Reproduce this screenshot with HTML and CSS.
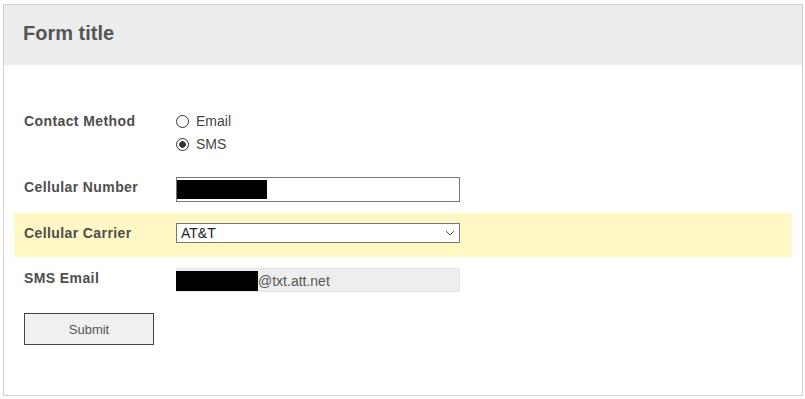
FILE: index.html
```html
<!DOCTYPE html>
<html lang="en">
<head>
    <meta charset="UTF-8">
    <meta name="viewport" content="width=device-width, initial-scale=1.0">
    <title>Form title</title>
    <link rel="stylesheet" href="styles.css">
</head>
<body>
    <div class="form-card">
        <div class="form-header">
            <h1>Form title</h1>
        </div>

        <form class="form-body">
            <div class="row">
                <div class="label label-tall">Contact Method</div>
                <div class="options">
                    <label class="option"><input type="radio" name="method" value="email"> Email</label>
                    <label class="option"><input type="radio" name="method" value="sms" checked> SMS</label>
                </div>
            </div>

            <div class="row">
                <div class="label">Cellular Number</div>
                <div class="text-box">
                    <span class="redact redact-number"></span>
                </div>
            </div>

            <div class="row row-highlight">
                <div class="label">Cellular Carrier</div>
                <div class="select-wrap">
                    <select class="select">
                        <option>AT&amp;T</option>
                        <option>Verizon</option>
                        <option>T-Mobile</option>
                    </select>
                    <svg class="chevron" width="10" height="6" viewBox="0 0 10 6">
                        <polyline points="1,1 5,5 9,1" fill="none" stroke="#555" stroke-width="1"/>
                    </svg>
                </div>
            </div>

            <div class="row">
                <div class="label">SMS Email</div>
                <div class="readonly-box">
                    <span class="redact redact-email"></span><span class="domain">@txt.att.net</span>
                </div>
            </div>

            <div class="actions">
                <button type="button" class="submit">Submit</button>
            </div>
        </form>
    </div>
</body>
</html>
```

FILE: styles.css
```css
body {
    margin: 0;
    font-family: "Liberation Sans", Arial, sans-serif;
    background: #ffffff;
}

.form-card {
    box-sizing: border-box;
    width: 800px;
    height: 392px;
    margin: 4px 0 0 3px;
    border: 1px solid #d0d0d0;
    background: #ffffff;
}

.form-header {
    height: 60px;
    display: flex;
    align-items: center;
    padding: 0 19px 3px;
    box-sizing: border-box;
    background: #ededed;
}

.form-header h1 {
    margin: 0;
    font-size: 20px;
    font-weight: bold;
    color: #555555;
}

.form-body {
    padding: 35px 10px 0;
}

.row {
    display: grid;
    grid-template-columns: 152px 284px;
    align-items: start;
    padding: 10px;
    margin-bottom: 1px;
}

.row-highlight {
    background: #fff7c4;
}

.label {
    font-size: 14px;
    font-weight: bold;
    line-height: 20px;
    letter-spacing: 0.4px;
    color: #4d4d4d;
}

.label-tall {
    line-height: 23px;
}

.options {
    display: flex;
    flex-direction: column;
}

.option {
    display: flex;
    align-items: center;
    font-size: 14px;
    line-height: 23px;
    color: #444444;
}

.option input {
    appearance: none;
    box-sizing: border-box;
    width: 13px;
    height: 13px;
    margin: 0 7px 0 0;
    border: 1px solid #333333;
    border-radius: 50%;
    background: #ffffff;
}

.option input:checked {
    background: radial-gradient(circle, #333333 0 3px, #ffffff 3.5px);
}

.text-box {
    box-sizing: border-box;
    height: 25px;
    padding: 2px 0 0;
    border: 1px solid #767676;
    background: #ffffff;
}

.redact {
    display: inline-block;
    background: #000000;
    vertical-align: top;
}

.redact-number {
    width: 90px;
    height: 19px;
}

.select-wrap {
    position: relative;
    height: 24px;
}

.select {
    appearance: none;
    box-sizing: border-box;
    width: 284px;
    height: 20px;
    margin: 0;
    padding: 0 4px;
    border: 1px solid #767676;
    border-radius: 0;
    background: #ffffff;
    font-family: "Liberation Sans", Arial, sans-serif;
    font-size: 14px;
    color: #222222;
}

.chevron {
    position: absolute;
    top: 7px;
    right: 5px;
    pointer-events: none;
}

.readonly-box {
    box-sizing: border-box;
    height: 24px;
    padding: 2px 0 0;
    border: 1px solid #e8e8e8;
    border-left: 0;
    background: #eeeeee;
    display: flex;
    align-items: flex-start;
}

.redact-email {
    width: 82px;
    height: 20px;
}

.domain {
    font-size: 14px;
    line-height: 20px;
    color: #555555;
}

.actions {
    padding: 10px;
}

.submit {
    box-sizing: border-box;
    width: 130px;
    height: 32px;
    border: 1px solid #444444;
    border-radius: 0;
    background: #f0f0f0;
    font-family: "Liberation Sans", Arial, sans-serif;
    font-size: 13px;
    color: #555555;
}
```
